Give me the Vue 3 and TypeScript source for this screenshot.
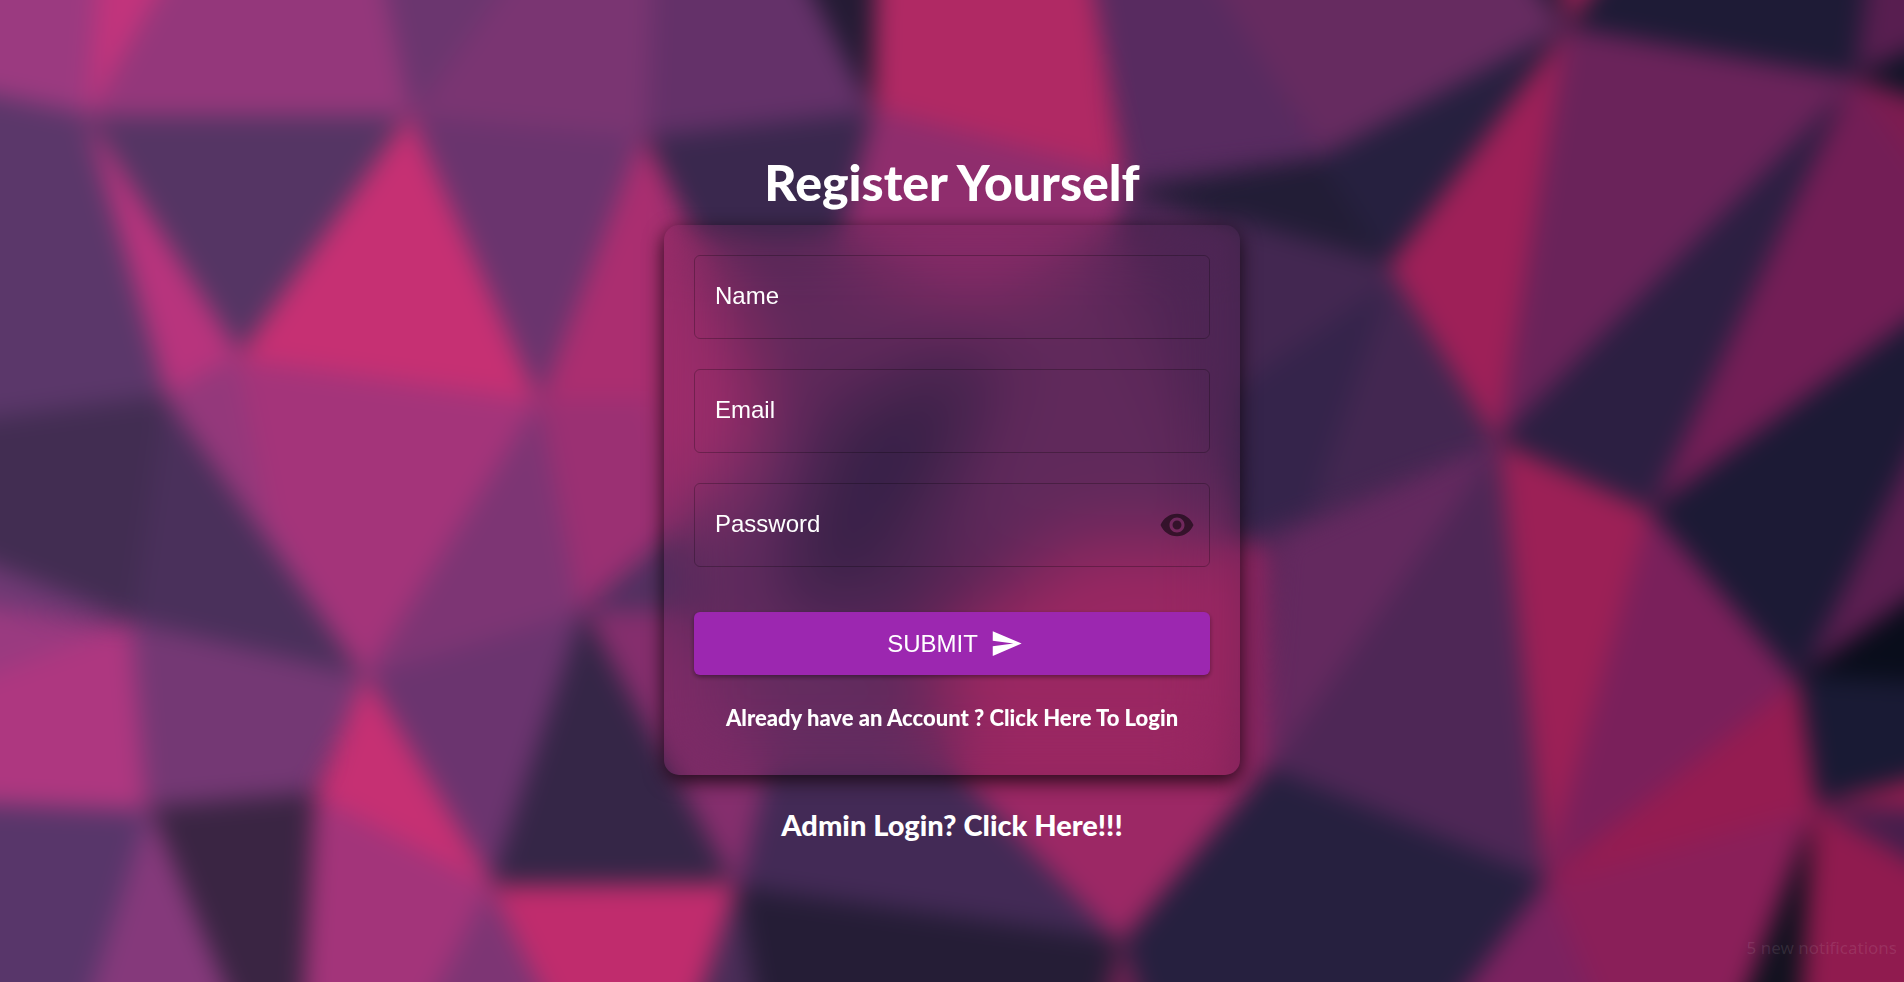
<script setup lang="ts">
import { ref } from 'vue'

interface Facet {
  fill: string
  points: number[]
}

const WIDTH = 1904
const HEIGHT = 982
const BLEED = 60

const facets: Facet[] = [
  // left side
  { fill: '#9b3a80', points: [0, 0, 105, 0, 88, 115, 0, 84] },
  { fill: '#c2347c', points: [102, 0, 190, 0, 88, 122] },
  { fill: '#94377b', points: [190, 0, 375, 0, 412, 116, 88, 118] },
  { fill: '#6b366f', points: [375, 0, 540, 0, 412, 116] },
  { fill: '#7a3572', points: [540, 0, 655, 0, 648, 138, 412, 118] },
  { fill: '#643169', points: [655, 0, 788, 0, 876, 112, 648, 138] },
  { fill: '#241b34', points: [785, 0, 880, 0, 874, 112] },
  { fill: '#5b376a', points: [0, 84, 88, 115, 168, 395, 0, 428] },
  { fill: '#553564', points: [88, 117, 412, 117, 240, 356] },
  { fill: '#b8347d', points: [88, 120, 240, 356, 232, 405, 172, 410] },
  { fill: '#c63073', points: [412, 112, 540, 404, 236, 362] },
  { fill: '#6a346e', points: [412, 117, 645, 138, 540, 402] },
  { fill: '#ab2e70', points: [644, 134, 770, 400, 540, 404] },
  { fill: '#422d52', points: [0, 426, 168, 396, 134, 618, 0, 545] },
  { fill: '#4a305b', points: [166, 394, 366, 680, 134, 620] },
  { fill: '#94387b', points: [166, 396, 240, 354, 300, 420, 366, 680] },
  { fill: '#a4347a', points: [238, 360, 540, 402, 366, 680, 270, 520] },
  { fill: '#7d3574', points: [540, 400, 586, 610, 366, 678] },
  { fill: '#9b3073', points: [540, 400, 720, 400, 680, 525, 580, 610] },
  { fill: '#523060', points: [584, 610, 690, 520, 700, 618] },
  { fill: '#6f3974', points: [0, 545, 132, 620, 0, 602] },
  { fill: '#9a3a80', points: [0, 600, 132, 628, 0, 696] },
  { fill: '#ae3780', points: [0, 694, 132, 624, 146, 814, 0, 800] },
  { fill: '#743874', points: [132, 622, 366, 678, 308, 798, 148, 812] },
  { fill: '#6b346f', points: [366, 678, 586, 612, 491, 880] },
  { fill: '#352647', points: [586, 605, 738, 884, 491, 887] },
  { fill: '#852e6d', points: [586, 612, 700, 612, 780, 790, 736, 886] },
  { fill: '#c63073', points: [366, 676, 494, 888, 314, 800] },
  { fill: '#a3347a', points: [312, 795, 491, 887, 415, 982, 300, 982] },
  { fill: '#3a2543', points: [148, 808, 314, 793, 300, 982, 245, 982] },
  { fill: '#58366a', points: [0, 802, 150, 812, 78, 982, 0, 982] },
  { fill: '#85397b', points: [150, 810, 248, 982, 76, 982] },
  { fill: '#7d3574', points: [491, 885, 580, 982, 410, 982] },
  { fill: '#c02c6d', points: [491, 886, 738, 884, 690, 982, 570, 982] },
  { fill: '#4a2d58', points: [738, 884, 765, 982, 685, 982] },
  // behind the form
  { fill: '#3a284e', points: [646, 138, 876, 112, 845, 250, 705, 250] },
  { fill: '#b02964', points: [878, 0, 1085, 0, 1124, 178, 874, 112] },
  { fill: '#662c60', points: [700, 248, 1110, 230, 1245, 540, 900, 560] },
  { fill: '#8f2d6d', points: [875, 110, 1130, 176, 1110, 240, 980, 310, 838, 250] },
  { fill: '#a52f70', points: [650, 190, 710, 248, 770, 430, 680, 540, 650, 400] },
  { fill: '#6b2f66', points: [690, 520, 790, 400, 860, 600, 970, 800, 780, 800] },
  { fill: '#3a224b', points: [840, 410, 1000, 340, 940, 500, 800, 640, 780, 560] },
  { fill: '#a32a68', points: [1240, 545, 1080, 540, 920, 640, 965, 800, 1240, 800] },
  { fill: '#432a56', points: [768, 775, 965, 775, 1124, 944, 740, 888] },
  { fill: '#9c2865', points: [955, 770, 1272, 770, 1122, 944] },
  // right side
  { fill: '#582b60', points: [1085, 0, 1188, 0, 1320, 155, 1130, 180] },
  { fill: '#662b60', points: [1188, 0, 1505, 0, 1566, 28, 1325, 158] },
  { fill: '#221d36', points: [1128, 190, 1325, 157, 1392, 265, 1230, 225] },
  { fill: '#26203f', points: [1320, 158, 1566, 28, 1392, 268] },
  { fill: '#54295a', points: [1150, 215, 1250, 225, 1250, 540, 1215, 420] },
  { fill: '#432751', points: [1235, 220, 1392, 265, 1498, 440, 1250, 540] },
  { fill: '#35244b', points: [1388, 285, 1310, 510, 1230, 540, 1235, 390] },
  { fill: '#271c37', points: [1505, 0, 1560, 0, 1566, 30] },
  { fill: '#9d2156', points: [1556, 0, 1632, 0, 1570, 34] },
  { fill: '#1e1b36', points: [1630, 0, 1876, 0, 1856, 78, 1568, 30] },
  { fill: '#581e50', points: [1874, 0, 1904, 0, 1904, 30, 1856, 76] },
  { fill: '#0f1426', points: [1904, 28, 1904, 118, 1856, 76] },
  { fill: '#9e2058', points: [1568, 28, 1500, 446, 1390, 266] },
  { fill: '#6a235a', points: [1568, 28, 1858, 80, 1498, 446] },
  { fill: '#2c1f42', points: [1850, 88, 1650, 515, 1496, 443] },
  { fill: '#731e56', points: [1854, 78, 1904, 115, 1904, 284, 1650, 514] },
  { fill: '#7d1c50', points: [1856, 80, 1904, 115, 1904, 230] },
  { fill: '#1c1a35', points: [1904, 282, 1904, 350, 1800, 690, 1650, 512] },
  { fill: '#5c1e51', points: [1904, 346, 1904, 565, 1800, 682] },
  { fill: '#090d1b', points: [1904, 562, 1904, 688, 1800, 676] },
  { fill: '#191a34', points: [1800, 676, 1904, 686, 1904, 766, 1815, 806] },
  { fill: '#931d4f', points: [1815, 806, 1904, 766, 1904, 816] },
  { fill: '#451e4c', points: [1815, 806, 1904, 812, 1904, 896] },
  { fill: '#901b4f', points: [1812, 804, 1904, 894, 1904, 982, 1796, 982] },
  { fill: '#11121f', points: [1813, 804, 1798, 982, 1720, 982] },
  { fill: '#8a1f59', points: [1815, 806, 1725, 982, 1610, 982, 1545, 880] },
  { fill: '#7c2260', points: [1545, 878, 1612, 982, 1425, 982] },
  { fill: '#9c2056', points: [1496, 441, 1650, 512, 1545, 882] },
  { fill: '#7a205b', points: [1650, 512, 1798, 684, 1545, 880] },
  { fill: '#951c51', points: [1798, 682, 1816, 808, 1545, 882] },
  { fill: '#4e2756', points: [1498, 443, 1545, 882, 1268, 772] },
  { fill: '#64295f', points: [1498, 443, 1266, 772, 1280, 540] },
  { fill: '#8c2561', points: [1230, 538, 1268, 550, 1266, 772, 1220, 780] },
  { fill: '#26203f', points: [1268, 768, 1545, 880, 1425, 982, 1150, 982, 1122, 944] },
  { fill: '#251d36', points: [738, 888, 1122, 940, 1100, 982, 765, 982] },
  { fill: '#722253', points: [1122, 938, 1154, 982, 1094, 982] },
]

function outline(points: number[]): string {
  const bleed = (value: number, limit: number) =>
    value === 0 ? -BLEED : value === limit ? limit + BLEED : value
  return points.map((v, i) => bleed(v, i % 2 ? HEIGHT : WIDTH)).join(' ')
}

const name = ref('')
const email = ref('')
const password = ref('')
const showPassword = ref(false)
</script>

<template>
  <div class="page">
    <svg class="backdrop" viewBox="0 0 1904 982" preserveAspectRatio="xMidYMid slice" aria-hidden="true">
      <g class="facets">
        <polygon
          v-for="(facet, i) in facets"
          :key="i"
          :points="outline(facet.points)"
          :fill="facet.fill"
          :stroke="facet.fill"
          stroke-width="2"
        />
      </g>
    </svg>

    <main class="content">
      <h1 class="title">Register Yourself</h1>

      <form class="card" @submit.prevent>
        <div class="field">
          <input id="name" v-model="name" type="text" />
          <label v-show="!name" for="name">Name</label>
        </div>
        <div class="field">
          <input id="email" v-model="email" type="email" />
          <label v-show="!email" for="email">Email</label>
        </div>
        <div class="field">
          <input id="password" v-model="password" :type="showPassword ? 'text' : 'password'" />
          <label v-show="!password" for="password">Password</label>
          <button class="eye" type="button" aria-label="Show password" @click="showPassword = !showPassword">
            <svg viewBox="0 0 24 24" width="36" height="36">
              <path d="M12 4.5C7 4.5 2.730 7.610 1 12c1.730 4.390 6 7.500 11 7.500s9.270-3.110 11-7.500c-1.730-4.390-6-7.500-11-7.500zM12 17c-2.760 0-5-2.240-5-5s2.240-5 5-5 5 2.240 5 5-2.240 5-5 5zm0-8c-1.660 0-3 1.340-3 3s1.340 3 3 3 3-1.340 3-3-1.340-3-3-3z" />
            </svg>
          </button>
        </div>

        <button class="submit" type="submit">
          SUBMIT
          <svg viewBox="0 0 24 24" width="33" height="33" aria-hidden="true">
            <path d="M2.010 21 23 12 2.010 3 2 10l15 2-15 2z" />
          </svg>
        </button>

        <a class="login" href="#login">Already have an Account ? Click Here To Login</a>
      </form>

      <a class="admin" href="#admin">Admin Login? Click Here!!!</a>
    </main>

    <div class="notice">5 new notifications</div>
  </div>
</template>

<style>
body {
  margin: 0;
}
</style>

<style scoped>
.page {
  position: relative;
  min-height: 100vh;
  overflow: hidden;
  background: #4e2756;
  color: #fff;
}

.backdrop {
  position: absolute;
  inset: 0;
  width: 100%;
  height: 100%;
}

.facets {
  filter: blur(12px);
}

.content {
  position: relative;
  display: flex;
  flex-direction: column;
  align-items: center;
  padding: 152px 24px 48px;
}

.title {
  margin: 0 0 13px;
  font: 900 50px/60px "Gill Sans", "Gill Sans MT", Lato, sans-serif;
}

.card {
  box-sizing: border-box;
  display: flex;
  flex-direction: column;
  gap: 30px;
  width: 100%;
  max-width: 576px;
  padding: 30px 30px 44px;
  border-radius: 15px;
  background: rgba(0, 0, 0, 0.05);
  backdrop-filter: blur(36px);
  box-shadow: 0 6px 20px rgba(0, 0, 0, 0.8);
}

.field {
  position: relative;
  height: 84px;
}

.field input {
  box-sizing: border-box;
  width: 100%;
  height: 100%;
  padding: 0 72px 0 20px;
  border: 1px solid rgba(0, 0, 0, 0.26);
  border-radius: 6px;
  background: transparent;
  color: #fff;
  font: 24px "Liberation Sans", Arial, sans-serif;
  outline: none;
}

.field label {
  position: absolute;
  top: 24px;
  left: 21px;
  font: 24px/34px "Liberation Sans", Arial, sans-serif;
}

.eye {
  position: absolute;
  top: 24px;
  right: 15px;
  display: flex;
  padding: 0;
  border: 0;
  background: transparent;
  cursor: pointer;
}

.eye svg {
  fill: rgba(0, 0, 0, 0.54);
}

.submit {
  display: flex;
  align-items: center;
  justify-content: center;
  gap: 12px;
  height: 63px;
  margin-top: 15px;
  padding: 0 6px 0 12px;
  border: 0;
  border-radius: 6px;
  background: #9c27b0;
  box-shadow: 0 2px 5px rgba(0, 0, 0, 0.4);
  color: #fff;
  font: 24px "Liberation Sans", Arial, sans-serif;
  cursor: pointer;
}

.submit svg {
  fill: currentColor;
}

.login {
  align-self: center;
  color: #fff;
  font: 900 22px/26px "Gill Sans", "Gill Sans MT", Lato, sans-serif;
  text-decoration: none;
}

.admin {
  margin-top: 32px;
  color: #fff;
  font: 900 29px/36px "Gill Sans", "Gill Sans MT", Lato, sans-serif;
  text-decoration: none;
}

.notice {
  position: absolute;
  right: 7px;
  bottom: 21px;
  color: rgba(255, 255, 255, 0.1);
  font: 17px/26px "Noto Sans", sans-serif;
}
</style>
